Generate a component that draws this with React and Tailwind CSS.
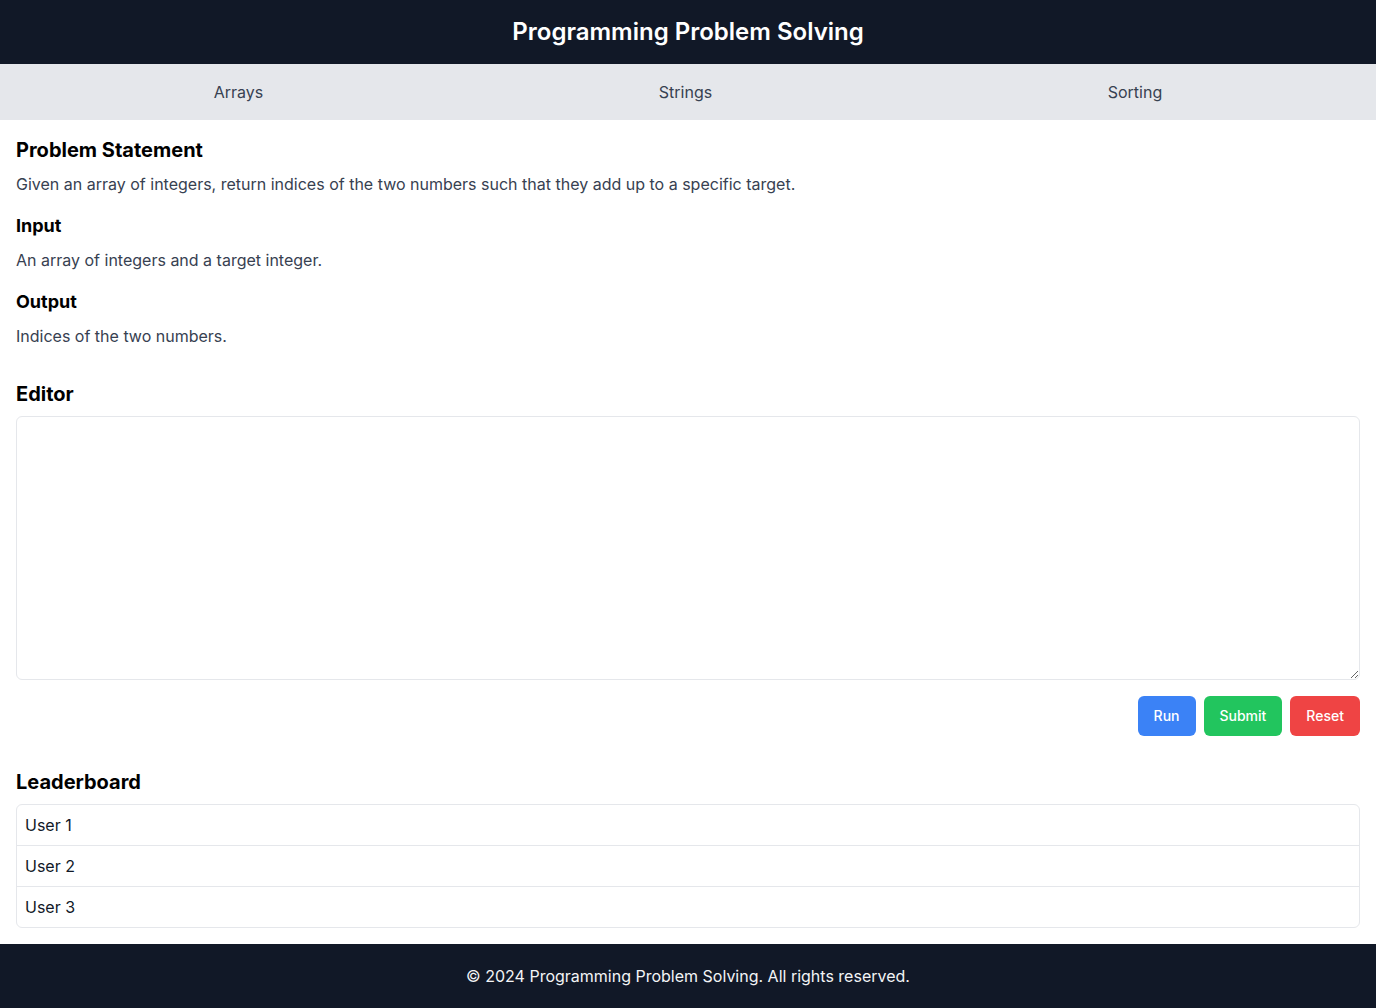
const topics = ['Arrays', 'Strings', 'Sorting']
const users = ['User 1', 'User 2', 'User 3']

export default function App() {
  return (
    <div className="min-h-screen bg-white font-['Inter',sans-serif] text-black">
      {/* Header */}
      <header className="bg-[#111827] py-4 text-center">
        <h1 className="text-2xl font-semibold text-white">Programming Problem Solving</h1>
      </header>

      {/* Topics */}
      <nav className="flex justify-around bg-[#e5e7eb] px-4 py-4">
        {topics.map((t) => (
          <a key={t} href="#" className="text-base text-[#374151]">
            {t}
          </a>
        ))}
      </nav>

      <main className="p-4">
        {/* Problem */}
        <section className="mb-8">
          <h2 className="mb-2 text-xl font-bold">Problem Statement</h2>
          <p className="mb-4 text-[#374151]">
            Given an array of integers, return indices of the two numbers such that they add up to a specific target.
          </p>
          <h3 className="mb-2 text-lg font-bold">Input</h3>
          <p className="mb-4 text-[#374151]">An array of integers and a target integer.</p>
          <h3 className="mb-2 text-lg font-bold">Output</h3>
          <p className="text-[#374151]">Indices of the two numbers.</p>
        </section>

        {/* Editor */}
        <section className="mb-8">
          <h2 className="mb-2 text-xl font-bold">Editor</h2>
          <textarea className="block h-66 w-full rounded-md border border-[#e5e7eb] p-2" />
          <div className="mt-4 flex justify-end gap-2">
            <button type="button" className="rounded-md bg-[#3b82f6] px-4 py-2.5 text-sm font-medium text-white">
              Run
            </button>
            <button type="button" className="rounded-md bg-[#22c55e] px-4 py-2.5 text-sm font-medium text-white">
              Submit
            </button>
            <button type="button" className="rounded-md bg-[#ef4444] px-4 py-2.5 text-sm font-medium text-white">
              Reset
            </button>
          </div>
        </section>

        {/* Leaderboard */}
        <section>
          <h2 className="mb-2 text-xl font-bold">Leaderboard</h2>
          <ul className="divide-y divide-[#e5e7eb] rounded-md border border-[#e5e7eb]">
            {users.map((u) => (
              <li key={u} className="px-2 py-2 text-[#111827]">
                {u}
              </li>
            ))}
          </ul>
        </section>
      </main>

      <footer className="bg-[#111827] py-5 text-center text-[#f3f4f6]">
        © 2024 Programming Problem Solving. All rights reserved.
      </footer>
    </div>
  )
}
